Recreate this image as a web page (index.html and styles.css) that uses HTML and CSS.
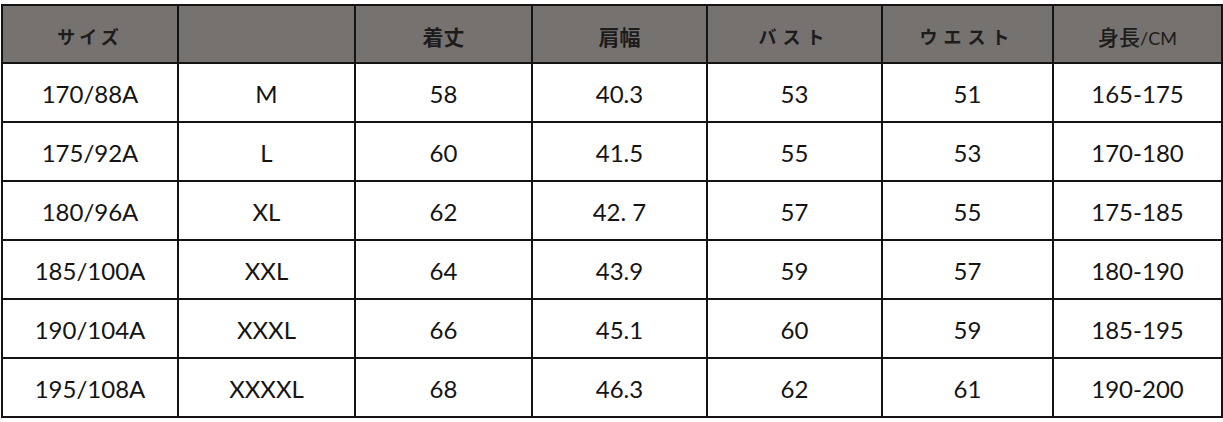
FILE: index.html
```html
<!DOCTYPE html>
<html lang="ja">
<head>
<meta charset="utf-8">
<title>サイズ表</title>
<link rel="stylesheet" href="styles.css">
</head>
<body>
<table class="size-table">
  <colgroup>
    <col class="c1"><col class="c2"><col class="c3"><col class="c4"><col class="c5"><col class="c6"><col class="c7">
  </colgroup>
  <thead>
    <tr>
      <th class="kana wide-s">サイズ</th>
      <th></th>
      <th>着丈</th>
      <th>肩幅</th>
      <th class="kana wide">バスト</th>
      <th class="kana wide">ウエスト</th>
      <th class="height-h"><span class="jp">身長</span><span class="unit">/CM</span></th>
    </tr>
  </thead>
  <tbody>
    <tr><td>170/88A</td><td>M</td><td>58</td><td>40.3</td><td>53</td><td>51</td><td>165-175</td></tr>
    <tr><td>175/92A</td><td>L</td><td>60</td><td>41.5</td><td>55</td><td>53</td><td>170-180</td></tr>
    <tr><td>180/96A</td><td>XL</td><td>62</td><td>42. 7</td><td>57</td><td>55</td><td>175-185</td></tr>
    <tr><td>185/100A</td><td>XXL</td><td>64</td><td>43.9</td><td>59</td><td>57</td><td>180-190</td></tr>
    <tr><td>190/104A</td><td>XXXL</td><td>66</td><td>45.1</td><td>60</td><td>59</td><td>185-195</td></tr>
    <tr><td>195/108A</td><td>XXXXL</td><td>68</td><td>46.3</td><td>62</td><td>61</td><td>190-200</td></tr>
  </tbody>
</table>
</body>
</html>
```
FILE: styles.css
```css
html, body {
  background: #ffffff;
}
body {
  margin: 4px 0 0 1px;
  font-family: Lato, "Noto Sans", "Noto Sans CJK JP", sans-serif;
}
.size-table {
  border-collapse: collapse;
  table-layout: fixed;
  width: 1220px;
}
.c1 { width: 176px; }
.c2 { width: 177px; }
.c3 { width: 177px; }
.c4 { width: 175px; }
.c5 { width: 175px; }
.c6 { width: 171px; }
.c7 { width: 169px; }
.size-table th,
.size-table td {
  border: 2px solid #141414;
  text-align: center;
  vertical-align: middle;
  padding: 0;
}
.size-table th {
  background: #76726f;
  color: #1c1c1c;
  height: 52px;
  padding-top: 4px;
  font-family: "Noto Sans CJK JP", sans-serif;
  font-weight: 700;
  font-size: 21px;
  line-height: 1;
}
.size-table th.kana {
  font-size: 18px;
}
.size-table th.wide-s {
  letter-spacing: 4px;
}
.size-table th.wide {
  letter-spacing: 6px;
}
.size-table th.height-h .jp {
  font-weight: 500;
  font-size: 21px;
}
.size-table th.height-h .unit {
  font-family: Lato, sans-serif;
  font-weight: 400;
  font-size: 18px;
}
.size-table td {
  height: 55px;
  padding-top: 2px;
  color: #141414;
  font-size: 24px;
  line-height: 1;
}
```
